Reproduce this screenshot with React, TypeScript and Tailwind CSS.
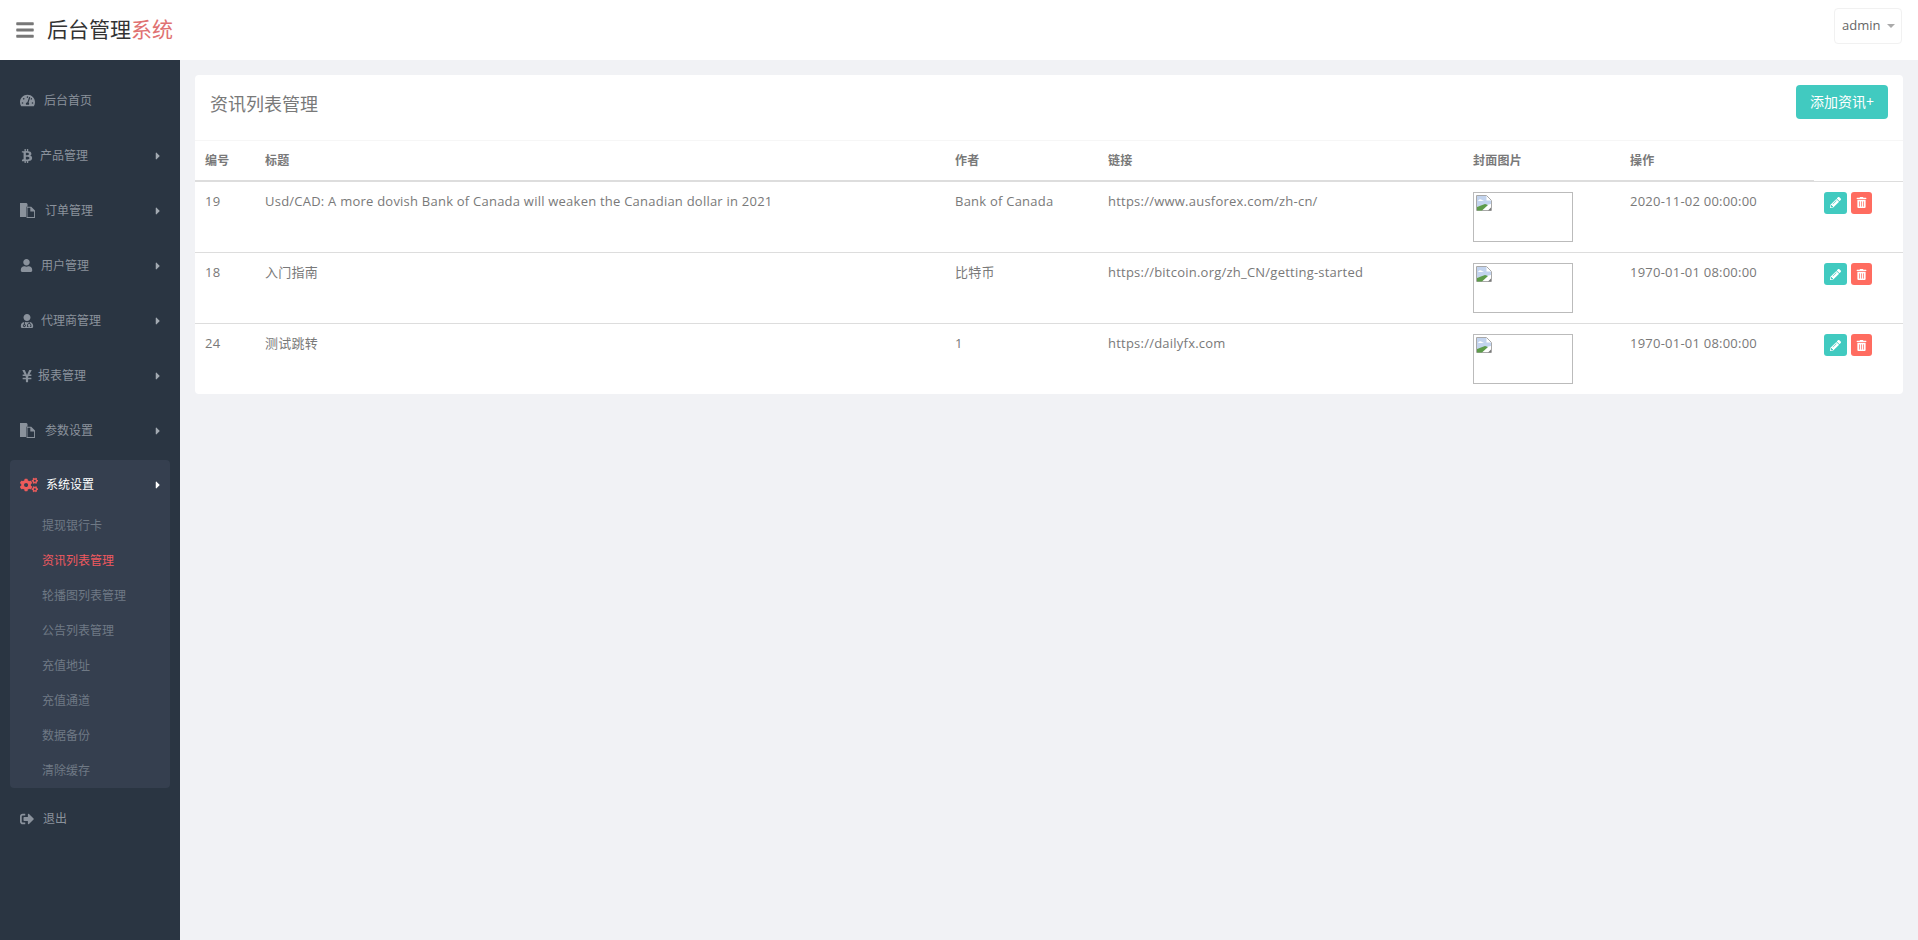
import { ReactNode } from 'react';
import { FaBars, FaBtc, FaCaretRight, FaCogs, FaPencilAlt, FaSignOutAlt, FaTachometerAlt, FaTrashAlt, FaUser, FaUserMd, FaYenSign } from 'react-icons/fa';

const font = { fontFamily: '"Open Sans", "Noto Sans CJK SC", sans-serif' };

// fa-files-o has no package version
function FilesIcon() {
    return (
        <svg viewBox="0 0 16 16" className="h-[15px] w-[15px]" fill="currentColor">
            <path d="M0 0h7l1 1v3H6.5v11H0z" />
            <path fillRule="evenodd" d="M7 4h5l4 4v8H7zM8 5v10h7V9h-4V5z" />
        </svg>
    );
}

function BrokenImage() {
    return (
        <svg viewBox="0 0 16 16" className="mt-0.5 ml-0.5 h-4 w-4">
            <path d="M.5.5h10l5 5v10H.5z" fill="#fff" stroke="#a9a9a9" />
            <path d="M1 1h9.500v4.500H15V9L1 12z" fill="#c3d4ee" />
            <path d="M1 15.500V12l8-3 3 1-6 5.500z" fill="#5d9b4a" />
            <path d="M12 15.500l3-3v3z" fill="#7a7a7a" />
            <path d="M2 6c1-2 3-2 4-1l2 1z" fill="#fff" />
        </svg>
    );
}

type Item = { label: string; icon: ReactNode; textClass: string; arrow?: boolean };

const menu: Item[] = [
    { label: '后台首页', icon: <FaTachometerAlt size={15} />, textClass: 'ml-[9px]' },
    { label: '产品管理', icon: <FaBtc size={14} />, textClass: 'ml-[5px]', arrow: true },
    { label: '订单管理', icon: <FilesIcon />, textClass: 'ml-[10px]', arrow: true },
    { label: '用户管理', icon: <FaUser size={13} />, textClass: 'ml-[6px]', arrow: true },
    { label: '代理商管理', icon: <FaUserMd size={14} />, textClass: 'ml-[6px]', arrow: true },
    { label: '报表管理', icon: <FaYenSign size={14} />, textClass: 'ml-[3px]', arrow: true },
    { label: '参数设置', icon: <FilesIcon />, textClass: 'ml-[10px]', arrow: true },
];

const subMenu = ['提现银行卡', '资讯列表管理', '轮播图列表管理', '公告列表管理', '充值地址', '充值通道', '数据备份', '清除缓存'];

const rows = [
    {
        id: 19,
        title: 'Usd/CAD: A more dovish Bank of Canada will weaken the Canadian dollar in 2021',
        author: 'Bank of Canada',
        link: 'https://www.ausforex.com/zh-cn/',
        time: '2020-11-02 00:00:00',
    },
    { id: 18, title: '入门指南', author: '比特币', link: 'https://bitcoin.org/zh_CN/getting-started', time: '1970-01-01 08:00:00' },
    { id: 24, title: '测试跳转', author: '1', link: 'https://dailyfx.com', time: '1970-01-01 08:00:00' },
];

function MenuRow({ item }: { item: Item }) {
    return (
        <a className="flex h-[55px] items-center pr-[16px] pl-[20px] text-xs text-[#8a929c]">
            <span className="flex w-[15px] shrink-0 justify-start">{item.icon}</span>
            <span className={item.textClass}>{item.label}</span>
            {item.arrow && <FaCaretRight size={12} className="ml-auto text-[#a3aab2]" />}
        </a>
    );
}

export default function App() {
    return (
        <div className="flex min-h-[940px] flex-col bg-[#f1f2f5]" style={font}>
            {/* top bar */}
            <header className="flex h-[60px] items-center bg-white pr-4 pl-[15px]">
                <FaBars size={20} className="text-[#777]" />
                <h1 className="ml-[12px] text-[21px] text-[#333]">
                    后台管理<span className="text-[#e07272]">系统</span>
                </h1>
                <button className="mb-[9px] ml-auto flex h-[36px] w-[68px] items-center rounded border border-[#f1f1f1] pl-[7px] text-[13px] text-[#666]">
                    admin
                    <span className="ml-[7px] h-0 w-0 border-x-[4px] border-t-[4px] border-x-transparent border-t-[#aaa]" />
                </button>
            </header>

            <div className="flex flex-1">
                {/* sidebar */}
                <aside className="w-[180px] shrink-0 bg-[#2a3542] pt-[13px]">
                    {menu.map((item) => (
                        <MenuRow key={item.label} item={item} />
                    ))}
                    <div className="mx-[10px] mt-[2px] h-[328px] rounded bg-[#353f4f]">
                        <div className="flex h-[48px] items-center pt-[2px] pr-[6px] pl-[10px] text-xs text-white">
                            <FaCogs size={18} className="text-[#ec5b5b]" />
                            <span className="ml-[8px]">系统设置</span>
                            <FaCaretRight size={12} className="ml-auto" />
                        </div>
                        <ul>
                            {subMenu.map((label) => (
                                <li
                                    key={label}
                                    className={`flex h-[35px] items-center pl-[32px] text-xs ${label === '资讯列表管理' ? 'text-[#f0595f]' : 'text-[#6f7985]'}`}
                                >
                                    {label}
                                </li>
                            ))}
                        </ul>
                    </div>
                    <a className="flex h-[62px] items-center pl-[20px] text-xs text-[#8a929c]">
                        <FaSignOutAlt size={14} />
                        <span className="ml-[9px]">退出</span>
                    </a>
                </aside>

                {/* content */}
                <main className="flex-1 px-[15px] pt-[15px]">
                    <section className="h-[319px] overflow-hidden rounded bg-white">
                        <div className="flex h-[66px] items-start justify-between border-b border-[#f6f6f6] pt-[10px] pr-[15px] pl-[15px]">
                            <h2 className="text-lg leading-[38px] text-[#797979]">资讯列表管理</h2>
                            <button className="h-[34px] w-[92px] rounded bg-[#41cac0] text-sm text-white">添加资讯+</button>
                        </div>
                        <table className="w-full table-fixed text-[13px] tracking-[0.23px] text-[#797979]">
                            <thead>
                                <tr className="h-[40px] text-left text-xs font-semibold">
                                    <th className="w-[60px] border-b-2 border-[#ddd] pl-[10px] font-semibold">编号</th>
                                    <th className="w-[690px] border-b-2 border-[#ddd] pl-[10px] font-semibold">标题</th>
                                    <th className="w-[153px] border-b-2 border-[#ddd] pl-[10px] font-semibold">作者</th>
                                    <th className="w-[365px] border-b-2 border-[#ddd] pl-[10px] font-semibold">链接</th>
                                    <th className="w-[157px] border-b-2 border-[#ddd] pl-[10px] font-semibold">封面图片</th>
                                    <th className="w-[194px] border-b-2 border-[#ddd] pl-[10px] font-semibold">操作</th>
                                    <th />
                                </tr>
                            </thead>
                            <tbody>
                                {rows.map((row) => (
                                    <tr key={row.id} className="h-[71px] align-top">
                                        <td className="border-t border-[#ddd] p-[10px] leading-[18px]">{row.id}</td>
                                        <td className="border-t border-[#ddd] p-[10px] leading-[18px]">{row.title}</td>
                                        <td className="border-t border-[#ddd] p-[10px] leading-[18px]">{row.author}</td>
                                        <td className="border-t border-[#ddd] p-[10px] leading-[18px]">{row.link}</td>
                                        <td className="border-t border-[#ddd] p-[10px]">
                                            <div className="h-[50px] w-[100px] border border-[#bbb]">
                                                <BrokenImage />
                                            </div>
                                        </td>
                                        <td className="border-t border-[#ddd] p-[10px] leading-[18px]">{row.time}</td>
                                        <td className="border-t border-[#ddd] p-[10px]">
                                            <div className="flex gap-1">
                                                <button className="flex h-[22px] w-[23px] items-center justify-center rounded-[3px] bg-[#41cac0] text-white">
                                                    <FaPencilAlt size={11} />
                                                </button>
                                                <button className="flex h-[22px] w-[21px] items-center justify-center rounded-[3px] bg-[#ff6c60] text-white">
                                                    <FaTrashAlt size={11} />
                                                </button>
                                            </div>
                                        </td>
                                    </tr>
                                ))}
                            </tbody>
                        </table>
                    </section>
                </main>
            </div>
        </div>
    );
}
